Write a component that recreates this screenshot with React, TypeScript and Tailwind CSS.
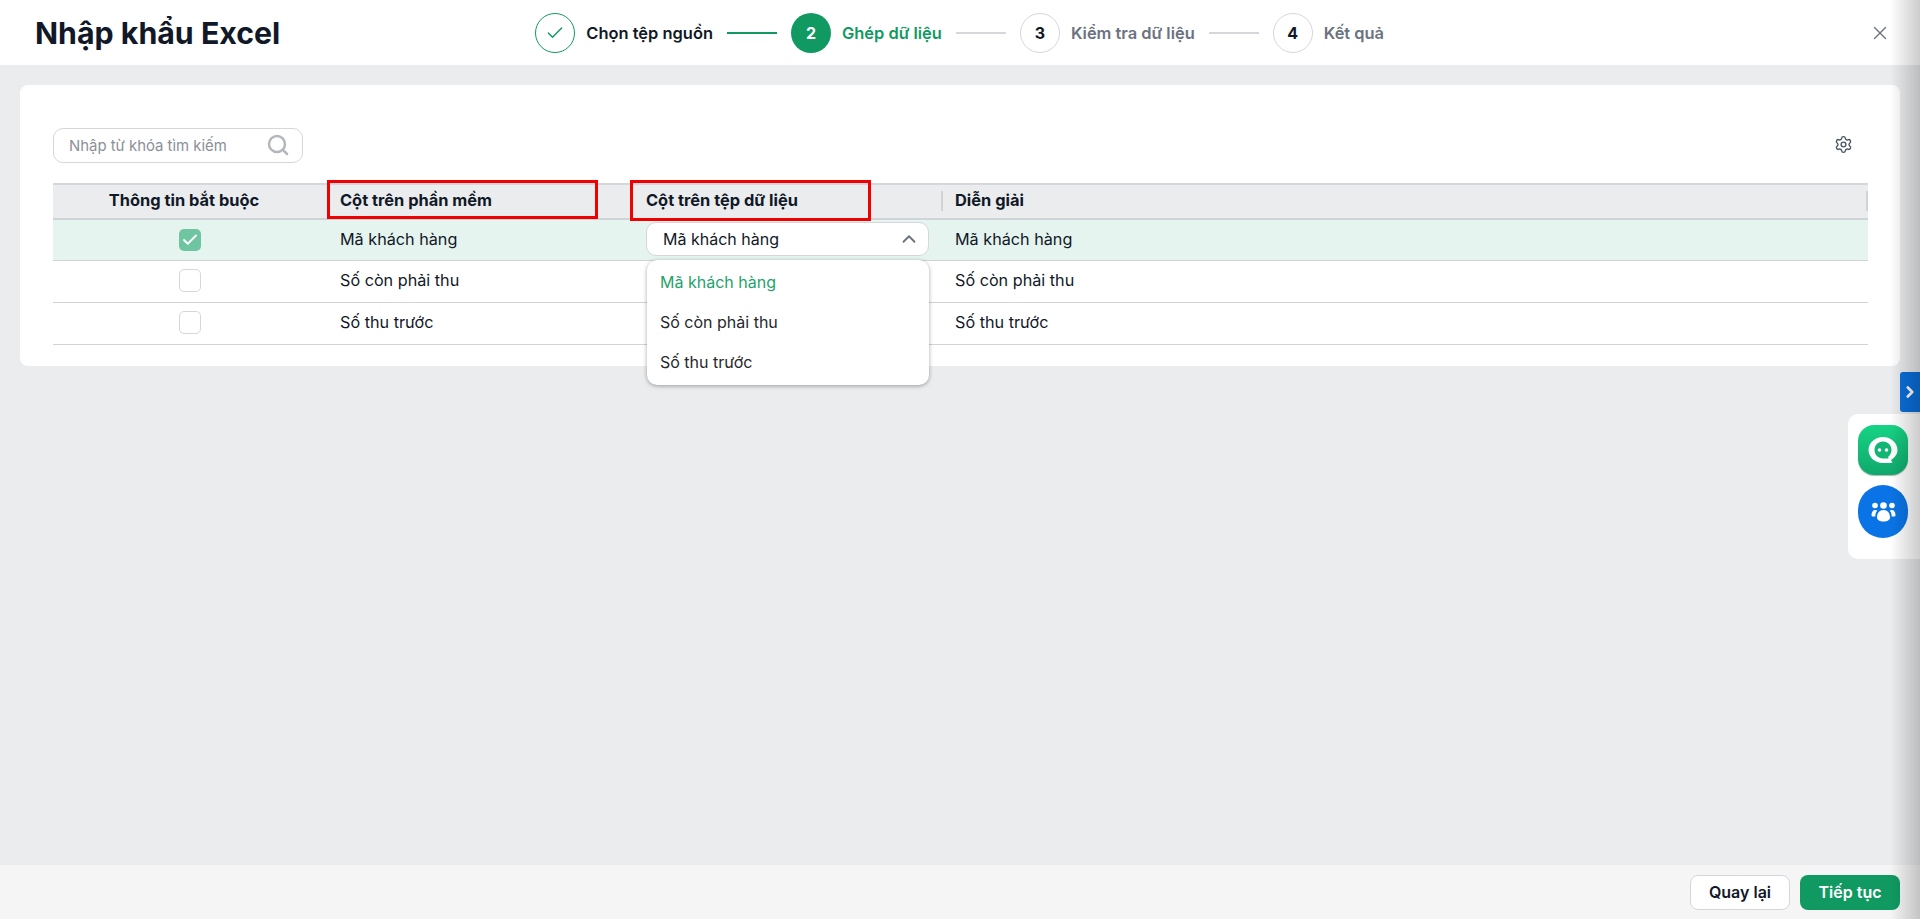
import { Check, ChevronRight, ChevronUp, Search, Settings, X } from 'lucide-react';

const STEPS = [
  { label: 'Chọn tệp nguồn', state: 'done' },
  { label: 'Ghép dữ liệu', state: 'active' },
  { label: 'Kiểm tra dữ liệu', state: 'todo' },
  { label: 'Kết quả', state: 'todo' },
];

const ROWS = ['Mã khách hàng', 'Số còn phải thu', 'Số thu trước'];

function Stepper() {
  return (
    <div className="ml-[255px] flex items-center">
      {STEPS.map((step, index) => (
        <div key={step.label} className="flex items-center">
          {step.state === 'done' && (
            <div className="flex h-10 w-10 items-center justify-center rounded-full border border-[#109a62] bg-white text-[#109a62]">
              <Check className="h-[20px] w-[20px]" strokeWidth={1.75} />
            </div>
          )}
          {step.state === 'active' && (
            <div className="flex h-10 w-10 items-center justify-center rounded-full bg-[#109a62] text-[16px] font-bold text-white">
              {index + 1}
            </div>
          )}
          {step.state === 'todo' && (
            <div className="flex h-10 w-10 items-center justify-center rounded-full border border-[#d5d7dc] bg-white text-[16px] font-bold text-[#111827]">
              {index + 1}
            </div>
          )}
          <span
            className={
              'mt-[1px] ml-[11px] text-[16.45px] font-semibold whitespace-nowrap ' +
              (step.state === 'done' ? 'text-[#111827]' : step.state === 'active' ? 'text-[#109a62]' : 'text-[#6b7280]')
            }
          >
            {step.label}
          </span>
          {index < STEPS.length - 1 && (
            <div className={'mx-[14px] h-[2px] w-[50px] ' + (step.state === 'done' ? 'bg-[#109a62]' : 'bg-[#d5d7dc]')} />
          )}
        </div>
      ))}
    </div>
  );
}

function MappingTable() {
  return (
    <div className="text-[16.2px] text-[#111827]">
      {/* Header */}
      <div className="grid h-[37px] grid-cols-[274px_307px_307px_1fr] items-center border-y-2 border-t-[#d5d7dc] border-b-[#d0d3d8] bg-[#ebecee] pb-[2px] text-[16.4px] font-bold">
        <div className="pr-[12px] text-center">Thông tin bắt buộc</div>
        <div className="relative flex h-full items-center pl-[13px]">
          Cột trên phần mềm
          <div className="absolute top-[-5px] left-0 h-[39px] w-[271px] border-[3px] border-[#f00000]" />
        </div>
        <div className="relative flex h-full items-center pl-[12px]">
          Cột trên tệp dữ liệu
          <div className="absolute top-[-5px] left-[-4px] h-[41px] w-[241px] border-[3px] border-[#f00000]" />
        </div>
        <div className="flex h-full items-center justify-between">
          <div className="flex h-[20px] items-center border-l-2 border-[#d0d3d8] pl-[12px]">Diễn giải</div>
          <div className="h-[20px] border-r-2 border-[#d0d3d8]" />
        </div>
      </div>

      {/* Rows */}
      {ROWS.map((row, index) => (
        <div
          key={row}
          className={
            'grid grid-cols-[274px_307px_307px_1fr] items-center border-b border-[#d0d3d8] ' +
            (index === 0 ? 'h-[41px] bg-[#e5f4ee] pb-[1px]' : index === 1 ? 'h-[42px] bg-white pb-[2px]' : 'h-[42px] bg-white pb-[3px]')
          }
        >
          <div className="flex justify-center">
            {index === 0 ? (
              <div className="flex h-[22px] w-[22px] items-center justify-center rounded-[5px] bg-[#6fc4a1] text-white">
                <Check className="h-[18px] w-[18px]" strokeWidth={2.5} />
              </div>
            ) : (
              <div className="h-[23px] w-[22px] rounded-[5px] border border-[#d5d7dc] bg-white" />
            )}
          </div>
          <div className="pl-[13px]">{row}</div>
          <div className="relative h-full pl-[12px]">
            {index === 0 && (
              <>
                <div className="mt-[2px] flex h-[34px] w-[283px] items-center justify-between rounded-[10px] border border-[#d5d7dc] bg-white pr-[8px] pl-[16px] text-[16px]">
                  Mã khách hàng
                  <ChevronUp className="h-[22px] w-[22px] text-[#6b7280]" strokeWidth={2} />
                </div>
                <div className="absolute top-[40px] left-[13px] z-10 flex h-[125px] w-[282px] flex-col justify-center rounded-[10px] bg-white pb-[2px] pl-[13px] text-[16px] shadow-[0_1px_4px_rgba(0,0,0,0.35)]">
                  <div className="flex h-[40px] items-center text-[#1fa36c]">Mã khách hàng</div>
                  <div className="flex h-[40px] items-center text-[#26282c]">Số còn phải thu</div>
                  <div className="flex h-[40px] items-center text-[#26282c]">Số thu trước</div>
                </div>
              </>
            )}
          </div>
          <div className="pl-[14px]">{row}</div>
        </div>
      ))}
    </div>
  );
}

function SideWidgets() {
  return (
    <>
      <div className="absolute top-[372px] right-0 flex h-[40px] w-[20px] items-center justify-center rounded-l-[3px] bg-[#0a6fdc] text-white">
        <ChevronRight className="h-[18px] w-[18px]" strokeWidth={3.5} />
      </div>
      <div className="absolute top-[414px] right-0 flex h-[145px] w-[72px] flex-col gap-[10px] rounded-l-[10px] bg-white pt-[11px] pl-[10px]">
        <div className="flex h-[50px] w-[50px] items-center justify-center rounded-[16px] bg-gradient-to-b from-[#16d484] to-[#10a86c] shadow-[0_1px_1px_rgba(0,0,0,0.3)]">
          <svg width="32" height="30" viewBox="0 0 32 30">
            <path d="M16 2C8 2 1.500 8 1.500 15S8 28 16 28c3 0 7 .2 9.500-.5l-1.500-2.500C28 22.500 30.500 19 30.500 15 30.500 8 24 2 16 2Z" fill="#fff" />
            <path d="M16 6.500c-5 0-8.500 3.800-8.500 8.500s3.500 8.500 8.500 8.500c2 0 4 .2 5.500 0l-.3-1.800c2-1.500 3.300-4 3.300-6.700 0-4.700-3.500-8.500-8.500-8.500Z" fill="#12b574" />
            <circle cx="12.500" cy="15" r="1.800" fill="#fff" />
            <circle cx="19.500" cy="15" r="1.800" fill="#fff" />
          </svg>
        </div>
        <div className="flex h-[53px] w-[50px] items-center justify-center rounded-full bg-[#0a74e6] text-white">
          <svg width="25" height="20" viewBox="0 0 25 20" fill="#fff">
            <circle cx="4" cy="3.500" r="2.800" />
            <circle cx="12.500" cy="3.500" r="3.300" />
            <circle cx="21" cy="3.500" r="2.800" />
            <path d="M.5 13c0-3 1.500-5 3.500-5 1 0 1.800.3 2.400.8C5 10 4.300 12 4.300 14.500H2C1 14.500.5 14 .5 13Z" />
            <path d="M24.500 13c0-3-1.500-5-3.500-5-1 0-1.800.3-2.400.8 1.400 1.200 2.100 3.200 2.100 5.700H23c1 0 1.500-.5 1.500-1.500Z" />
            <path d="M6 15.500C6 11 8.500 8 12.500 8S19 11 19 15.500c0 2.500-3 4-6.500 4S6 18 6 15.500Z" />
          </svg>
        </div>
      </div>
    </>
  );
}

export default function App() {
  return (
    <div className="relative flex h-[919px] w-[1920px] flex-col overflow-hidden bg-[#ebecee] font-['Inter',sans-serif]">
      <header className="flex h-[65px] shrink-0 items-center bg-white pl-[35px]">
        <h1 className="mt-[2px] text-[30.3px] font-bold text-[#111827]">Nhập khẩu Excel</h1>
        <Stepper />
        <button className="absolute top-[22px] left-[1869px] text-[#6b7280]">
          <X className="h-[22px] w-[22px]" strokeWidth={1.5} />
        </button>
      </header>

      <main className="min-h-0 flex-1 px-[20px] pt-[20px]">
        <div className="h-[281px] w-[1880px] rounded-[8px] bg-white pt-[43px] pr-[32px] pl-[33px]">
          <div className="mb-[20px] flex items-center justify-between">
            <div className="flex h-[35px] w-[250px] items-center justify-between rounded-[10px] border border-[#d5d7dc] pr-[12px] pl-[15px] text-[14.9px] text-[#8b9098]">
              <span className="mt-[1px]">Nhập từ khóa tìm kiếm</span>
              <Search className="mt-[-1px] h-[24px] w-[24px] text-[#b4b7bc]" strokeWidth={2.5} />
            </div>
            <Settings className="mt-[-2px] mr-[15px] h-[19px] w-[19px] text-[#4b5563]" strokeWidth={1.75} />
          </div>
          <MappingTable />
        </div>
      </main>

      <footer className="flex h-[54px] shrink-0 items-center justify-end gap-[10px] bg-[#f5f5f5] pr-[20px]">
        <button className="h-[35px] w-[100px] rounded-[8px] border border-[#d5d7dc] bg-white text-[16px] font-semibold text-[#111827]">
          Quay lại
        </button>
        <button className="h-[35px] w-[100px] rounded-[8px] bg-[#109a62] text-[16px] font-semibold text-white">
          Tiếp tục
        </button>
      </footer>

      <SideWidgets />
      {/* shadow down the right edge of the window */}
      <div className="pointer-events-none absolute top-0 right-0 bottom-0 w-[30px] bg-gradient-to-r from-transparent to-[rgba(0,0,0,0.2)]" />
    </div>
  );
}
